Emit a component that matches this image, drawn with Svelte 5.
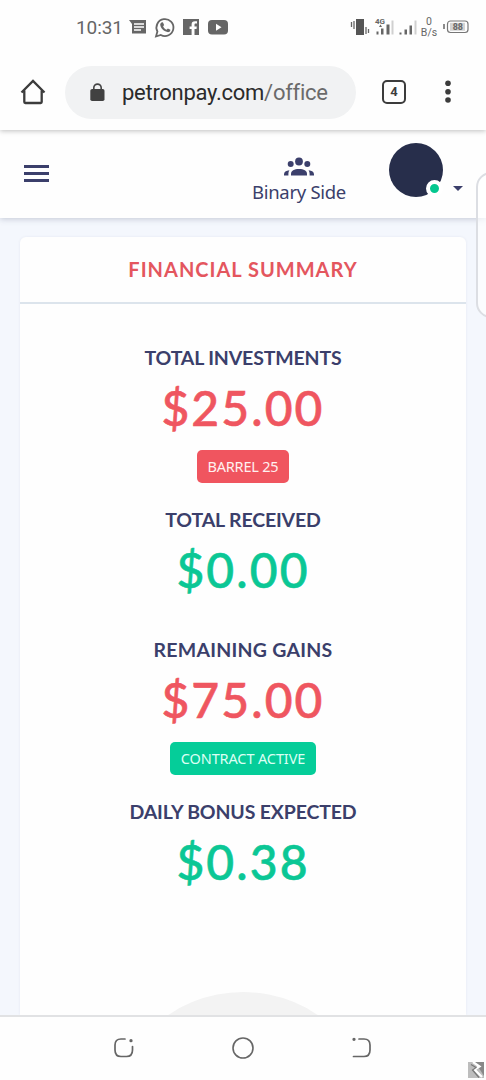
<script lang="ts">
	type Stat = {
		label: string;
		value: string;
		tone: 'red' | 'green';
		key: string;
		badge?: string;
	};

	const stats: Stat[] = [
		{ key: 'investments', label: 'Total investments', value: '$25.00', tone: 'red', badge: 'BARREL 25' },
		{ key: 'received', label: 'Total received', value: '$0.00', tone: 'green' },
		{ key: 'remaining', label: 'Remaining gains', value: '$75.00', tone: 'red', badge: 'CONTRACT ACTIVE' },
		{ key: 'bonus', label: 'Daily bonus expected', value: '$0.38', tone: 'green' }
	];
</script>

<div class="screen">
	<div class="status-bar">
		<span class="clock">10:31</span>
		<svg class="status-left" width="102" height="24" viewBox="0 0 102 24" fill="#666">
			<path d="M0 4h17v13.500H3V8z" />
			<path d="M5 8h10M5 11h10M5 14h7" stroke="#fff" stroke-width="1.3" />
			<path d="M27 20.500l1.400-5A8.500 8.500 0 1 1 31.800 19z" fill="none" stroke="#666" stroke-width="1.800" />
			<path d="M32.400 6.500l1.500-.2 1.200 2.800-1 1.300c.8 1.600 1.900 2.600 3.500 3.300l1.300-1.300 2.500 1.300c0 2-1.600 2.600-3 2.400-3.800-.8-7-4-7.200-7.500 0-.9.500-1.600 1.200-2.100z" />
			<path d="M54 3h16v16h-4.500v-6h2l.3-2.600h-2.300V8.700c0-.8.3-1.200 1.300-1.200h1.200V5.200h-2c-2.300 0-3.400 1.200-3.400 3.200v2h-2V13h2v6H54z" />
			<rect x="79" y="4" width="20" height="14.500" rx="4" />
			<path d="M87 7.700v7l5.500-3.500z" fill="#fff" />
		</svg>
		<svg class="status-right" width="122" height="28" viewBox="0 0 122 28" fill="#666">
			<rect x="7" y="6" width="8" height="16" fill="#555" />
			<path d="M2.500 9v5M5 8v8M17 14v7M19.500 16v4" stroke="#666" stroke-width="1.300" />
			<text x="26" y="10.500" class="tiny-net">4G</text>
			<path d="M27.500 18.500h2v3h-2zM32 15.500h2.500v6h-2.500zM37.500 11.500h3v10h-3z" />
			<path d="M42.500 7.500h2v14h-2z" fill="#d0d0d0" />
			<path d="M30 14l1.500-2.500 1.500 2.500z" />
			<path d="M50.500 19.500h2v2h-2zM55.500 16.500h2.500v5h-2.500zM60.500 12.500h2.500v9h-2.500z" />
			<path d="M65.500 7.500h2v14h-2z" fill="#d0d0d0" />
			<text x="80" y="12" class="tiny-rate">0</text>
			<text x="80" y="23" class="tiny-rate">B/s</text>
			<path d="M95 11v5" stroke="#666" stroke-width="1.500" />
			<rect x="98.500" y="8" width="20.500" height="11.500" rx="3" fill="none" stroke="#777" stroke-width="1.200" />
			<rect x="101" y="9.800" width="15" height="8" fill="#d4d4d4" />
			<text x="108.800" y="17.200" class="tiny-batt">88</text>
		</svg>
	</div>

	<div class="browser-bar">
		<svg class="home" width="26" height="26" viewBox="0 0 26 26" fill="none" stroke="#3c3c3c" stroke-width="2.300">
			<path d="M1.500 13.500L13 2l11.500 11.500M4.300 11.500V23a1 1 0 0 0 1 1h15.400a1 1 0 0 0 1-1V11.500" />
		</svg>
		<div class="address">
			<svg width="15" height="19" viewBox="0 0 15 19">
				<path d="M3.800 7V4.800a3.700 3.700 0 0 1 7.400 0V7" fill="none" stroke="#444" stroke-width="1.600" />
				<rect x=".3" y="6" width="14.200" height="12" rx="1.800" fill="#414141" />
			</svg>
			<span class="url">petronpay.com<span class="path">/office</span></span>
		</div>
		<div class="tabs">4</div>
		<svg class="dots" width="8" height="24" viewBox="0 0 8 24" fill="#3c3c3c">
			<circle cx="4" cy="3.300" r="2.800" />
			<circle cx="4" cy="11.700" r="2.800" />
			<circle cx="4" cy="20" r="2.800" />
		</svg>
	</div>

	<header class="app-header">
		<button class="menu" aria-label="Menu">
			<i></i>
			<i></i>
			<i></i>
		</button>
		<div class="side-link">
			<svg width="30" height="20" viewBox="0 0 30 20" fill="#3b3f6b">
				<circle cx="15" cy="4.500" r="3.900" />
				<path d="M7 18.500v-1.500c0-3.500 3.200-5 8-5s8 1.500 8 5v1.500z" />
				<circle cx="6.700" cy="7" r="3" />
				<circle cx="23.300" cy="7" r="3" />
				<path d="M0 18.500v-1c0-2.500 1.900-4 5.500-4.200-.8 1-1.100 2.200-1.100 3.700v1.500zM30 18.500v-1c0-2.500-1.900-4-5.500-4.200.8 1 1.100 2.200 1.100 3.700v1.500z" />
			</svg>
			<span>Binary Side</span>
		</div>
		<div class="avatar"><span class="online"></span></div>
		<span class="caret"></span>
	</header>

	<main class="content">
		<section class="card">
			<h1 class="card-title">Financial summary</h1>
			<div class="card-body">
				{#each stats as stat (stat.key)}
					<div class="stat {stat.key}">
						<h2 class="label">{stat.label}</h2>
						<p class="value {stat.tone}">{stat.value}</p>
						{#if stat.badge}
							<span class="badge">{stat.badge}</span>
						{/if}
					</div>
				{/each}
				<div class="gauge"></div>
			</div>
		</section>
	</main>

	<nav class="nav-bar">
		<svg width="22" height="22" viewBox="0 0 22 22" fill="none" stroke="#666" stroke-width="1.700" stroke-linecap="round">
			<path d="M12 2H8C4 2 2 4 2 8v5c0 4 2 6.500 6 6.500h5.500c4 0 6-2.500 6-6.500v-3.500" />
			<circle cx="18" cy="3.700" r=".8" fill="#666" />
		</svg>
		<svg width="24" height="24" viewBox="0 0 24 24" fill="none" stroke="#666" stroke-width="1.600">
			<circle cx="12" cy="12" r="10" />
		</svg>
		<svg width="22" height="22" viewBox="0 0 22 22" fill="none" stroke="#666" stroke-width="1.700" stroke-linecap="round">
			<path d="M8 2h5c4 0 6 2.500 6 6v5c0 4-2 6.500-6 6.500H2.500" />
			<circle cx="3" cy="2.300" r=".8" fill="#666" />
		</svg>
	</nav>

	<div class="edge-panel"></div>
	<svg class="watermark" width="16" height="16" viewBox="0 0 16 16">
		<path d="M0 0h16v16H0z" fill="#bdbdbd" />
		<path d="M7 0h9v14z" fill="#888" />
		<path d="M5 0l6.500 4.500-5 3L14 15" fill="none" stroke="#fff" stroke-width="2.200" />
		<path d="M3 2.500l5 3-3.500 2.500 6.500 7.500" fill="none" stroke="#777" stroke-width="1.200" />
	</svg>
</div>

<style>
	:global(body) {
		margin: 0;
		background: #fff;
	}

	.screen {
		position: relative;
		display: flex;
		flex-direction: column;
		width: 486px;
		height: 1080px;
		overflow: hidden;
		background: #fefefe;
		font-family: Lato, sans-serif;
	}

	svg {
		display: block;
		flex: none;
	}

	/* Phone status bar */
	.status-bar {
		display: flex;
		align-items: center;
		flex: none;
		height: 54px;
		padding-left: 76px;
		box-sizing: border-box;
		color: #666;
	}

	.clock {
		width: 53px;
		font: 19px Roboto, sans-serif;
		letter-spacing: -0.100px;
	}

	.status-left {
		margin-top: 2px;
	}

	.status-right {
		margin-left: 118px;
	}

	.tiny-net {
		font: bold 8px Roboto, sans-serif;
	}

	.tiny-rate {
		font: 10.500px Roboto, sans-serif;
		text-anchor: middle;
	}

	.tiny-batt {
		font: bold 9px Roboto, sans-serif;
		text-anchor: middle;
	}

	/* Browser toolbar */
	.browser-bar {
		position: relative;
		z-index: 2;
		display: flex;
		align-items: center;
		flex: none;
		height: 76px;
		padding: 0 0 0 20px;
		box-sizing: border-box;
		background: #fefefe;
		box-shadow: 0 1px 5px rgba(0, 0, 0, 0.25);
		clip-path: inset(0 0 -10px);
	}

	.address {
		display: flex;
		align-items: center;
		gap: 17px;
		width: 291px;
		height: 53px;
		margin-left: 19px;
		padding-left: 25px;
		box-sizing: border-box;
		border-radius: 27px;
		background: #f1f2f3;
	}

	.url {
		font: 22px Roboto, sans-serif;
		letter-spacing: -0.280px;
		color: #2b2b2b;
	}

	.path {
		color: #6a6a6a;
	}

	.tabs {
		width: 24px;
		height: 24px;
		margin-left: 26px;
		box-sizing: border-box;
		border: 2px solid #3c3c3c;
		border-radius: 5px;
		font: bold 13px/20px Roboto, sans-serif;
		text-align: center;
		color: #3c3c3c;
	}

	.dots {
		margin-left: 38px;
	}

	/* App header */
	.app-header {
		position: relative;
		z-index: 1;
		display: flex;
		flex: none;
		height: 88px;
		padding-left: 24px;
		box-sizing: border-box;
		background: #fefefe;
		box-shadow: 0 1px 6px rgba(80, 90, 120, 0.3);
	}

	.menu {
		display: flex;
		flex-direction: column;
		gap: 4.500px;
		width: 25px;
		margin: 35px 0 0;
		padding: 0;
		border: 0;
		background: none;
	}

	.menu i {
		flex: none;
		height: 2.500px;
		background: #3b3f6b;
	}

	.side-link {
		display: flex;
		flex-direction: column;
		align-items: center;
		width: 100px;
		margin: 27px 0 0 200px;
		font: 18.500px/26px 'Noto Sans', sans-serif;
		letter-spacing: -0.300px;
		white-space: nowrap;
		color: #3b3f6b;
	}

	.side-link span {
		margin-top: 2px;
	}

	.avatar {
		position: relative;
		width: 54px;
		height: 54px;
		margin: 13px 0 0 40px;
		border-radius: 50%;
		background: #272e4b;
	}

	.online {
		position: absolute;
		right: 0;
		bottom: 0;
		width: 9px;
		height: 9px;
		border: 4px solid #fff;
		border-radius: 50%;
		background: #04c78f;
	}

	.caret {
		height: 0;
		margin: 56px 0 0 10px;
		border: 5.500px solid transparent;
		border-top-color: #3b3f6b;
		border-bottom: 0;
	}

	/* Summary card */
	.content {
		flex: 1;
		min-height: 0;
		padding: 19px 20px 0;
		overflow: hidden;
		background: #f4f7fd;
	}

	.card {
		height: 100%;
		border-radius: 6px 6px 0 0;
		background: #fefefe;
		box-shadow: 0 0 3px rgba(60, 70, 110, 0.08);
		text-align: center;
	}

	.card-title {
		height: 67px;
		margin: 0;
		box-sizing: border-box;
		border-bottom: 2px solid #dce4ec;
		font-size: 20px;
		line-height: 65px;
		text-transform: uppercase;
		letter-spacing: 1px;
		color: #e4565e;
	}

	.card-body {
		display: flex;
		flex-direction: column;
		height: 712px;
		overflow: hidden;
	}

	.stat {
		display: flex;
		flex-direction: column;
		align-items: center;
		flex: none;
		height: 163px;
	}

	.investments {
		height: 162px;
		padding-top: 39px;
	}

	.received {
		height: 130px;
	}

	.remaining {
		height: 162px;
	}

	.label {
		margin: 0;
		font-size: 19.500px;
		line-height: 30px;
		text-transform: uppercase;
		letter-spacing: -0.150px;
		color: #3b3f6b;
	}

	.remaining .label {
		letter-spacing: 0.250px;
	}

	.value {
		margin: 0;
		font-size: 48px;
		font-weight: 500;
		line-height: 70px;
		letter-spacing: 2.100px;
		-webkit-text-stroke: 0.600px currentColor;
	}

	.red {
		color: #ef5660;
	}

	.green {
		color: #0bc795;
	}

	.badge {
		height: 33px;
		margin-top: 7px;
		padding: 0 11px;
		border-radius: 5px;
		background: #f0555f;
		font: 14.500px/33px 'Noto Sans', sans-serif;
		letter-spacing: -0.200px;
		color: #fff0f0;
	}

	.remaining .badge {
		background: #05cd99;
		letter-spacing: -0.120px;
		color: #dcfff4;
	}

	.gauge {
		flex: none;
		align-self: center;
		width: 266px;
		height: 266px;
		margin-top: 32px;
		border-radius: 50%;
		background: #f3f3f3;
	}

	/* Phone navigation */
	.nav-bar {
		position: relative;
		display: flex;
		justify-content: space-between;
		align-items: center;
		flex: none;
		height: 65px;
		padding: 0 113px 2px;
		box-sizing: border-box;
		border-top: 2px solid #e1e2e4;
		background: #fefefe;
	}

	.edge-panel {
		position: absolute;
		z-index: 3;
		top: 172px;
		left: 476px;
		width: 30px;
		height: 146px;
		box-sizing: border-box;
		border: 2px solid #dcdee3;
		border-radius: 18px;
		background: rgba(255, 255, 255, 0.6);
	}

	.watermark {
		position: absolute;
		right: 2px;
		bottom: 2px;
	}
</style>
